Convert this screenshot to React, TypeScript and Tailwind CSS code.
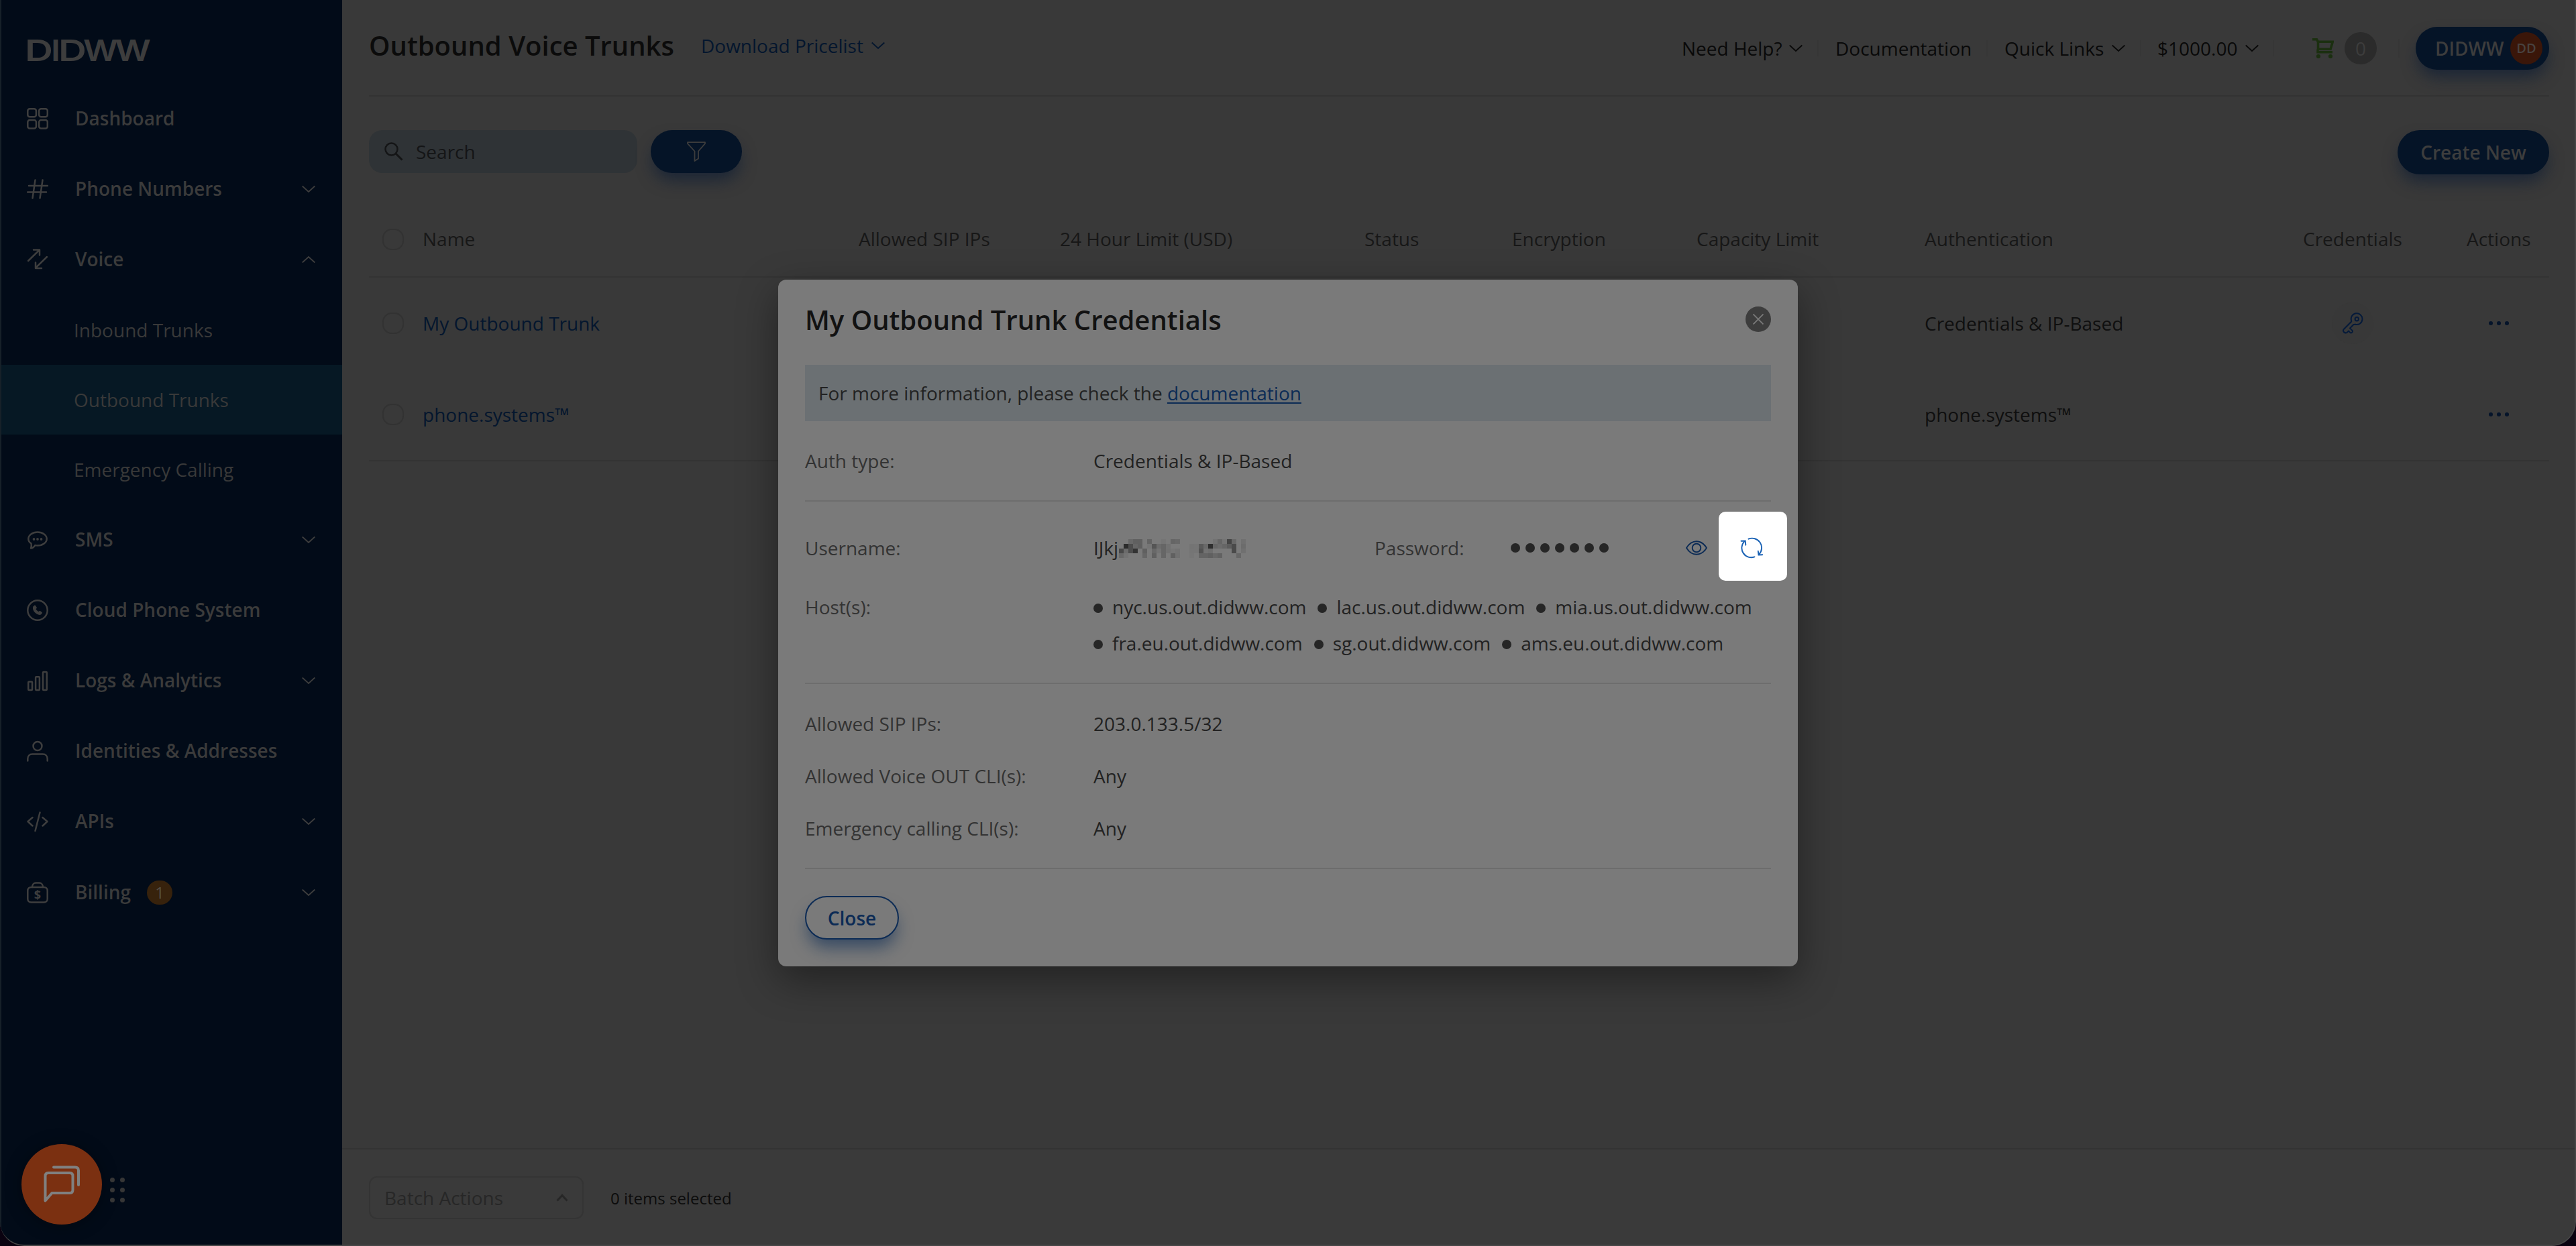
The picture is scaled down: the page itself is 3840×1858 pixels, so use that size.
import type { ReactNode } from "react";

const Chevron = ({ up, className = "" }: { up?: boolean; className?: string }) => (
  <svg viewBox="0 0 20 12" className={`h-3 w-5 ${className}`} fill="none" stroke="currentColor" strokeWidth="1.8">
    <path d={up ? "M0.7 10.5 10 2l9.300 8.500" : "M0.7 1.500 10 10l9.300-8.500"} />
  </svg>
);

const NavIcon = ({ children }: { children: ReactNode }) => (
  <svg
    viewBox="0 0 32 32"
    className="h-8 w-8 shrink-0 text-[#3e3e3e]"
    fill="none"
    stroke="currentColor"
    strokeWidth="2.5"
    strokeLinecap="round"
    strokeLinejoin="round"
  >
    {children}
  </svg>
);

const voiceItems = [
  { label: "Inbound Trunks", active: false },
  { label: "Outbound Trunks", active: true },
  { label: "Emergency Calling", active: false },
];

const menu = [
  {
    label: "Dashboard",
    height: "h-[105px]",
    icon: (
      <>
        <rect x="1.300" y="1.300" width="12.600" height="12" rx="3" />
        <rect x="18.200" y="1.300" width="12.600" height="12" rx="3" />
        <rect x="1.300" y="18" width="12.600" height="12.500" rx="3" />
        <rect x="18.200" y="18" width="12.600" height="12.500" rx="3" />
      </>
    ),
  },
  {
    label: "Phone Numbers",
    height: "h-[105px]",
    chevron: "down",
    icon: <path d="M3 11h28M1 20.500h28M12.500 2.500 8.500 29.500M23.500 2.500l-4 27" />,
  },
  {
    label: "Voice",
    height: "h-[106px]",
    chevron: "up",
    items: voiceItems,
    icon: <path d="M2 18 18.500 2M10 1.500h9V9.500M30 12 13.500 28M13 20.500v8.500h9" />,
  },
  {
    label: "SMS",
    height: "h-[105px]",
    chevron: "down",
    icon: (
      <>
        <path d="M6.500 21.500C3.800 19.700 2.300 17.300 2.300 14.500 2.300 9 8.300 4.600 16 4.600S29.700 9 29.700 14.500 23.700 24.500 16 24.500c-1.300 0-2.500-.1-3.700-.4C10.500 27 8 28.500 6 28.500c1-2 1-4.500.5-7Z" />
        <g fill="currentColor" stroke="none">
          <circle cx="10.500" cy="15" r="1.900" />
          <circle cx="16" cy="15" r="1.900" />
          <circle cx="21.500" cy="15" r="1.900" />
        </g>
      </>
    ),
  },
  {
    label: "Cloud Phone System",
    height: "h-[105px]",
    icon: (
      <>
        <circle cx="16" cy="16" r="14.700" />
        <path
          fill="currentColor"
          stroke="none"
          d="M9.300 10.500 11 9c.8-.6 1.600-.5 2.100.2l1.500 2.400c.4.8.2 1.400-.4 1.900l-.7.600c.8 1.800 2.100 3.100 4 4l.8-.7c.6-.5 1.300-.6 1.900-.2l2.200 1.600c.7.600.7 1.300.1 2l-1.500 1.600c-2.800 1.300-6.300-.2-8.800-2.800s-4-6.300-2.900-9.100Z"
        />
      </>
    ),
  },
  {
    label: "Logs & Analytics",
    height: "h-[105px]",
    chevron: "down",
    icon: (
      <>
        <rect x="2.200" y="17.500" width="5.800" height="12.500" rx="1" />
        <rect x="13.100" y="10.300" width="5.800" height="19.700" rx="1" />
        <rect x="24" y="3" width="5.800" height="27" rx="1" />
      </>
    ),
  },
  {
    label: "Identities & Addresses",
    height: "h-[105px]",
    icon: (
      <>
        <circle cx="16" cy="8.500" r="6.500" />
        <path d="M1.300 30.500v-3c0-4 2.500-7 7-7h15.400c4.500 0 7 3 7 7v3" />
      </>
    ),
  },
  {
    label: "APIs",
    height: "h-[105px]",
    chevron: "down",
    icon: <path d="M8.500 10 1.500 16l7 6.500M23.500 10l7 6-7 6.500M19.500 2.500l-7 27.500" />,
  },
  {
    label: "Billing",
    height: "h-[107px]",
    chevron: "down",
    badge: 1,
    icon: (
      <>
        <rect x="1.300" y="8" width="29.400" height="22.500" rx="5" />
        <path d="M8 8c0-4 2.500-6.500 5.500-6.500h5c3 0 5.500 2.500 5.500 6.500" />
        <text
          x="16"
          y="25.800"
          textAnchor="middle"
          fill="currentColor"
          stroke="none"
          className="font-['Open_Sans',sans-serif] text-[18px] font-bold"
        >
          $
        </text>
      </>
    ),
  },
];

// redacted part of the username, 27 x 4 cells
const mosaic: Record<number, string>[] = [
  { 2: "#686868", 3: "#606060", 4: "#606060", 6: "#646464", 9: "#757575", 11: "#656565", 12: "#686868", 20: "#727272", 21: "#666666", 22: "#747474", 23: "#444444", 24: "#686868", 26: "#707070" },
  { 1: "#2c2c2c", 2: "#4c4c4c", 3: "#666666", 4: "#5f5f5f", 6: "#757575", 7: "#555555", 8: "#6c6c6c", 9: "#666666", 10: "#727272", 15: "#747474", 16: "#757575", 17: "#5a5a5a", 18: "#6a6a6a", 19: "#2e2e2e", 20: "#666666", 21: "#6c6c6c", 22: "#666666", 23: "#5c5c5c", 24: "#4a4a4a", 26: "#6c6c6c" },
  { 0: "#484848", 1: "#6b6b6b", 2: "#4c4c4c", 3: "#333333", 5: "#606060", 7: "#686868", 8: "#737373", 9: "#666666", 10: "#717171", 11: "#757575", 12: "#727272", 15: "#757575", 16: "#757575", 17: "#525252", 18: "#727272", 19: "#6e6e6e", 24: "#4a4a4a", 26: "#707070" },
  { 0: "#686868", 1: "#737373", 5: "#666666", 7: "#606060", 9: "#666666", 11: "#606060", 12: "#717171", 15: "#767676", 17: "#646464", 18: "#646464", 19: "#606060", 20: "#686868", 21: "#626262", 25: "#666666" },
];

const hosts = [
  ["nyc.us.out.didww.com", "lac.us.out.didww.com", "mia.us.out.didww.com"],
  ["fra.eu.out.didww.com", "sg.out.didww.com", "ams.eu.out.didww.com"],
];

const rows = [
  { name: "My Outbound Trunk", auth: "Credentials & IP-Based", hasKey: true },
  { name: "phone.systems™", auth: "phone.systems™", hasKey: false },
];

const columns = [
  "Name",
  "Allowed SIP IPs",
  "24 Hour Limit (USD)",
  "Status",
  "Encryption",
  "Capacity Limit",
  "Authentication",
  "Credentials",
  "Actions",
];

function Logo() {
  return (
    <svg viewBox="0 0 188 34" className="h-[34px] w-[188px] overflow-visible" fill="#3d3d3d">
      <text y="32.600" className="font-[Inter,sans-serif] text-[43.500px] font-semibold">
        <tspan x="-3" textLength="42" lengthAdjust="spacingAndGlyphs">D</tspan>
        <tspan x="36" textLength="14" lengthAdjust="spacingAndGlyphs">I</tspan>
        <tspan x="47" textLength="42" lengthAdjust="spacingAndGlyphs">D</tspan>
        <tspan x="84" textLength="52" lengthAdjust="spacingAndGlyphs">W</tspan>
        <tspan x="131" textLength="54" lengthAdjust="spacingAndGlyphs">W</tspan>
      </text>
    </svg>
  );
}

function Sidebar() {
  return (
    <aside className="flex w-[510px] shrink-0 flex-col border-l-2 border-[#172129] bg-[#020b18]">
      <div className="h-[124px] pl-[38px] pt-[58px]">
        <Logo />
      </div>
      {menu.map((item) => (
        <div key={item.label}>
          <div className={`flex items-center pl-[38px] pr-10 ${item.height}`}>
            <NavIcon>{item.icon}</NavIcon>
            <span className="mb-0.5 ml-10 text-[28px] font-semibold text-[#3b3b3b]">{item.label}</span>
            {item.badge && (
              <span className="ml-6 flex h-9 w-[38px] items-center justify-center rounded-full bg-[#37220c] text-2xl text-[#555047]">
                {item.badge}
              </span>
            )}
            {item.chevron && <Chevron up={item.chevron === "up"} className="ml-auto text-[#3e3e3e]" />}
          </div>
          {item.items?.map((sub) => (
            <div
              key={sub.label}
              className={`flex h-[104px] items-center pl-[108px] text-[28px] text-[#393939] ${sub.active ? "bg-[#061824]" : ""}`}
            >
              {sub.label}
            </div>
          ))}
        </div>
      ))}
    </aside>
  );
}

function Header() {
  return (
    <header className="flex h-36 border-b-2 border-[#333333]">
      <h1 className="mt-[40px] h-[56px] text-[40px] font-semibold leading-[56px] text-[#0b0b0b]">Outbound Voice Trunks</h1>
      <div className="ml-10 mt-[40px] flex h-[56px] items-center text-[28px] text-[#04162e]">
        Download Pricelist
        <Chevron className="ml-3" />
      </div>
      <nav className="ml-auto mt-10 flex h-16 items-center text-[28px] text-[#090909]">
        <div className="flex h-6 w-[204px] items-center border-r-2 border-[#363636]">
          Need Help?
          <Chevron className="ml-2.5" />
        </div>
        <div className="flex h-6 w-[252px] items-center border-r-2 border-[#363636] pl-[25px]">Documentation</div>
        <div className="flex h-6 w-[229px] items-center border-r-2 border-[#363636] pl-[25px]">
          Quick Links
          <Chevron className="ml-3" />
        </div>
        <div className="flex h-6 w-[198px] items-center border-r-2 border-[#363636] pl-6">
          $1000.00
          <Chevron className="ml-3" />
        </div>
        <div className="flex h-7 w-[187px] items-center border-r-2 border-[#363636] pl-[57px]">
          <svg viewBox="0 0 32 30" className="h-[30px] w-8" fill="none" stroke="#1b2f10" strokeWidth="3.500">
            <path d="M0 1.800h6.500l2 3.500v12.200M8 5.300h22.300l-3.200 11H9M8 16.500v4.300h22" />
            <circle cx="9" cy="27" r="3.100" fill="#1b2f10" stroke="none" />
            <circle cx="27" cy="27" r="3.100" fill="#1b2f10" stroke="none" />
          </svg>
          <span className="ml-4 flex h-12 w-12 items-center justify-center rounded-full bg-[#2b2b2b] text-[28px] text-[#3d3d3d]">0</span>
        </div>
        <div className="ml-6 flex h-16 w-[199px] items-center justify-between rounded-full bg-[#051427] pl-[29px] pr-2.5 font-semibold text-[#3d3d3d] shadow-[0_14px_24px_-4px_rgba(5,24,52,0.6)]">
          DIDWW
          <span className="flex h-12 w-12 items-center justify-center rounded-full bg-[#3a1609] text-[20px] text-[#484240]">DD</span>
        </div>
      </nav>
    </header>
  );
}

function Toolbar() {
  return (
    <div className="flex items-start pt-[50px]">
      <div className="flex h-16 w-[400px] items-center rounded-[20px] bg-[#2f3336] pl-[23px] text-[28px] text-[#141516]">
        <svg viewBox="0 0 28 28" className="h-7 w-7" fill="none" stroke="currentColor" strokeWidth="2.500">
          <circle cx="10.500" cy="10.500" r="9" />
          <path d="m17 17 9.500 9.500" strokeWidth="3" />
        </svg>
        <span className="ml-[19px]">Search</span>
      </div>
      <button className="ml-5 flex h-16 w-[136px] items-center justify-center rounded-full bg-[#051427] shadow-[0_14px_24px_-4px_rgba(5,24,52,0.6)]">
        <svg viewBox="0 0 28 30" className="h-[30px] w-7" fill="none" stroke="#3d3d3d" strokeWidth="1.800" strokeLinejoin="round">
          <path d="M1 1.200h26v2L17 14.500v11L11.500 29V14.500L1 3.200Z" />
        </svg>
      </button>
      <button className="ml-auto h-[66px] w-[226px] rounded-full bg-[#051427] text-[28px] font-semibold text-[#3d3d3d] shadow-[0_14px_24px_-4px_rgba(5,24,52,0.6)]">
        Create New
      </button>
    </div>
  );
}

const rowGrid = "grid grid-cols-[80px_650px_300px_454px_220px_275px_340px_564px_244px_123px] items-center";

const Checkbox = () => <span className="ml-5 block h-8 w-8 rounded-[14px] border-2 border-[#323232]" />;

function TrunksTable() {
  return (
    <div className="mt-[42px] border-b-2 border-[#333333] text-[28px]">
      <div className={`${rowGrid} h-[112px] border-b-2 border-[#333333] text-[#171717]`}>
        <Checkbox />
        {columns.map((name) => (
          <span key={name} className="mb-0.5 whitespace-nowrap">
            {name}
          </span>
        ))}
      </div>
      {rows.map((row) => (
        <div key={row.name} className={`${rowGrid} h-[136px]`}>
          <Checkbox />
          <span className="mb-px text-[#04162e]">{row.name}</span>
          <span className="col-start-8 mb-px text-[#0f0f0f]">{row.auth}</span>
          {row.hasKey && (
            <span className="ml-[43px] flex h-[62px] w-[62px] items-center justify-center rounded-full bg-[#383838]">
              <svg viewBox="0 0 32 32" className="h-8 w-8" fill="none" stroke="#051a3a" strokeWidth="2" strokeLinejoin="round">
                <circle cx="22.300" cy="9.700" r="2.700" />
                <path d="M14.200 12.500A8.400 8.400 0 1 1 20 17.800l-2.600.2-5.400 5.400 3.500 3.500c1.300 2-1 4.300-3 3.200l-2.500-2.600-2.300 2.300C4.500 31.500.6 28.500 2.500 25.200L14.200 13.500Z" />
              </svg>
            </span>
          )}
          <span className="col-start-10 ml-[33px] flex gap-1.5">
            <i className="h-1.5 w-1.5 rounded-full bg-[#05142a]" />
            <i className="h-1.5 w-1.5 rounded-full bg-[#05142a]" />
            <i className="h-1.5 w-1.5 rounded-full bg-[#05142a]" />
          </span>
        </div>
      ))}
    </div>
  );
}

function BatchBar() {
  return (
    <footer className="mt-auto flex h-36 items-start border-t-2 border-[#333333] bg-[#3a3a3a] pl-10 pt-10">
      <div className="flex h-16 w-80 items-center justify-between rounded-xl border-2 border-[#343434] px-[21px] text-[28px] text-[#272727]">
        Batch Actions
        <svg viewBox="0 0 18 12" className="h-3 w-[18px]" fill="none" stroke="currentColor" strokeWidth="3">
          <path d="m1.500 10.500 7.500-8 7.500 8" />
        </svg>
      </div>
      <span className="ml-10 text-2xl/[66px] text-[#0c0c0c]">0 items selected</span>
    </footer>
  );
}

function Field({ label, value }: { label: string; value: string }) {
  return (
    <div className="flex h-[78px] items-center">
      <span className="w-[430px] text-[#333333]">{label}</span>
      <span>{value}</span>
    </div>
  );
}

function CredentialsModal() {
  return (
    <div className="absolute left-[1160px] top-[417px] flex h-[1024px] w-[1520px] flex-col rounded-xl bg-[#7a7a7a] px-10 text-[28px] text-[#222222] shadow-[0_20px_60px_rgba(0,0,0,0.4)]">
      <div className="flex h-[127px] items-start justify-between">
        <h2 className="mt-[32px] text-[40px] font-semibold leading-[56px] text-[#121212]">My Outbound Trunk Credentials</h2>
        <button className="mt-10 flex h-[38px] w-[38px] items-center justify-center rounded-full bg-[#3d3d3d]">
          <svg viewBox="0 0 16 16" className="h-4 w-4" stroke="#7a7a7a" strokeWidth="1.800">
            <path d="m.5.5 15 15M15.500.5l-15 15" />
          </svg>
        </button>
      </div>

      <div className="flex h-[84px] shrink-0 items-center bg-[#6b7073] pl-5">
        <p>
          For more information, please check the{" "}
          <a className="text-[#0c2b55] underline decoration-2 underline-offset-3">documentation</a>
        </p>
      </div>

      <div className="h-[120px] shrink-0 border-b-2 border-[#6d6d6d] pt-5">
        <Field label="Auth type:" value="Credentials & IP-Based" />
      </div>

      <div className="h-[272px] shrink-0 border-b-2 border-[#6d6d6d] pt-[17px]">
        <div className="flex h-[104px] items-center">
          <span className="w-[430px] text-[#333333]">Username:</span>
          <div className="flex w-[419px] items-center">
            <span className="w-[38px] overflow-hidden">IJkj</span>
            <div className="mt-0.5 grid grid-cols-[repeat(27,7px)] grid-rows-[repeat(4,7px)]">
              {mosaic.map((line, r) =>
                Array.from({ length: 27 }, (_, c) => (
                  <i key={`${r}-${c}`} style={{ backgroundColor: line[c] ?? "transparent" }} />
                ))
              )}
            </div>
          </div>
          <span className="w-[203px] text-[#333333]">Password:</span>
          <div className="flex w-[261px] gap-2">
            {Array.from({ length: 7 }, (_, i) => (
              <i key={i} className="h-3.5 w-3.5 rounded-full bg-[#262626]" />
            ))}
          </div>
          <svg viewBox="0 0 32 22" className="h-[22px] w-8 shrink-0" fill="none" stroke="#0c2b55" strokeWidth="1.900">
            <path d="M1 11C5 4.500 10 1.200 16 1.200S27 4.500 31 11c-4 6.500-9 9.800-15 9.800S5 17.500 1 11Z" />
            <circle cx="16" cy="11" r="6.300" />
          </svg>
          <div className="-mr-6 mb-1.5 ml-[17px] flex h-[103px] w-[102px] shrink-0 items-center justify-center rounded-[10px] bg-white pr-1 pt-1.5">
            <svg viewBox="0 0 34 32" className="h-8 w-[34px]" fill="none" stroke="#1760b4" strokeWidth="1.900" strokeLinecap="round">
              <path d="M12.500 2.700A14.200 14.200 0 0 1 28.300 25.500M21.500 29.400A14.200 14.200 0 0 1 6.300 6.300" />
              <path d="M1.500 5.800l6.200-.3.600 6.200M26.800 20.800l.7 5.700 5.700-.3" />
            </svg>
          </div>
        </div>
        <div className="flex pt-[9px] leading-[54px]">
          <span className="w-[430px] text-[#333333]">Host(s):</span>
          <div>
            {hosts.map((line) => (
              <div key={line[0]} className="flex h-[54px]">
                {line.map((host) => (
                  <span key={host} className="mr-[17px] flex items-center gap-3.5">
                    <i className="mt-1 h-3.5 w-3.5 rounded-full bg-[#262626]" />
                    {host}
                  </span>
                ))}
              </div>
            ))}
          </div>
        </div>
      </div>

      <div className="h-[276px] shrink-0 border-b-2 border-[#6d6d6d] pt-5">
        <Field label="Allowed SIP IPs:" value="203.0.133.5/32" />
        <Field label="Allowed Voice OUT CLI(s):" value="Any" />
        <Field label="Emergency calling CLI(s):" value="Any" />
      </div>

      <button className="mt-10 h-[65px] w-[140px] rounded-full border-2 border-[#0c2b55] bg-[#7a7a7a] font-semibold text-[#0c2b55] shadow-[0_16px_24px_-4px_rgba(12,43,85,0.6)]">
        Close
      </button>
    </div>
  );
}

function ChatWidget() {
  return (
    <div className="absolute bottom-[30px] left-8 flex items-center">
      <div className="flex h-[120px] w-[120px] items-center justify-center rounded-full bg-[#7b3011] shadow-[0_2px_24px_rgba(0,0,0,0.35)]">
        <svg viewBox="0 0 56 56" className="h-14 w-14" fill="none" stroke="#808080" strokeWidth="4" strokeLinecap="round" strokeLinejoin="round">
          <path d="M3.500 52.500V15.500c0-3 1.500-4.500 4.500-4.500h32c3 0 4.500 1.500 4.500 4.500v21c0 3-1.500 4.500-4.500 4.500H13.500Z" />
          <path d="M16 2.500h32c3.500 0 5 1.500 5 5v21.500" />
        </svg>
      </div>
      <div className="ml-3 mt-4 grid grid-cols-2 gap-2">
        {Array.from({ length: 6 }, (_, i) => (
          <i key={i} className="h-[7px] w-[7px] rounded-full bg-[#363636]" />
        ))}
      </div>
    </div>
  );
}

export default function App() {
  return (
    <div className="h-[1858px] w-[3840px] overflow-hidden bg-[#0a0210] font-['Open_Sans',sans-serif]">
      <div className="relative flex h-[1858px] overflow-hidden rounded-b-[36px] border-b-2 border-r-2 border-[#464646] bg-[#393939]">
        <Sidebar />
        <main className="flex grow flex-col">
          <div className="pl-10 pr-[38px]">
            <Header />
            <Toolbar />
            <TrunksTable />
          </div>
          <BatchBar />
        </main>
        <ChatWidget />
        <CredentialsModal />
      </div>
    </div>
  );
}
